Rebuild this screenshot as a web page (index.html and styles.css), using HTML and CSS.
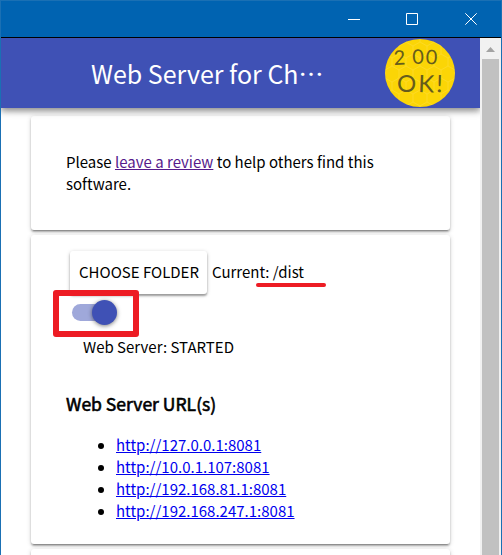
FILE: index.html
```html
<!DOCTYPE html>
<html lang="en">
<head>
<meta charset="utf-8">
<title>Web Server for Chrome</title>
<link rel="stylesheet" href="styles.css">
</head>
<body>
<div class="window">
  <div class="titlebar">
    <svg class="control minimize" viewBox="0 0 12 12"><path d="M0 6.5H12"/></svg>
    <svg class="control" viewBox="0 0 12 12"><path d="M.5.5h11v11H.5z"/></svg>
    <svg class="control" viewBox="0 0 12 12"><path d="M.3.3l11.4 11.4M11.7.3L.3 11.7"/></svg>
  </div>
  <div class="viewport">
    <main class="page">
      <header class="toolbar">
        <h1 class="title">Web Server for Ch<span class="dots" lang="zh-CN">…</span></h1>
        <svg class="badge" viewBox="0 0 70 70">
          <defs>
            <pattern id="hex" width="14" height="24" patternUnits="userSpaceOnUse">
              <path d="M7 0v4l7 4v8l-7 4v4M7 4L0 8v8l7 4" fill="none" stroke="#ffe052" stroke-width=".8"/>
            </pattern>
          </defs>
          <ellipse cx="35" cy="35" rx="35" ry="34" fill="#fbd506"/>
          <ellipse cx="35" cy="35" rx="35" ry="34" fill="url(#hex)" opacity=".5"/>
          <text class="ink" x="9 27.500 40.500" y="27 26 26" font-size="20" rotate="-3 -2 2">200</text>
          <text class="ink" x="12 33 51" y="54 54 54" font-size="24" rotate="0 2 2">OK!</text>
        </svg>
      </header>
      <div class="cards">
        <section class="card review">
          <p class="text">Please <a class="visited" href="#">leave a review</a> to help others find this<br>software.</p>
        </section>
        <section class="card server">
          <div class="folder">
            <button class="choose">CHOOSE FOLDER</button>
            <span class="current">Current: /dist<i class="underline"></i></span>
          </div>
          <div class="switch"><span class="track"></span><span class="knob"></span><span class="frame"></span></div>
          <div class="status">Web Server: STARTED</div>
          <h2 class="heading">Web Server URL(s)</h2>
          <ul class="urls">
            <li><a href="#">http://127.0.0.1:8081</a></li>
            <li><a href="#">http://10.0.1.107:8081</a></li>
            <li><a href="#">http://192.168.81.1:8081</a></li>
            <li><a href="#">http://192.168.247.1:8081</a></li>
          </ul>
        </section>
        <section class="card next"></section>
      </div>
    </main>
    <div class="scrollbar">
      <svg class="arrow" viewBox="0 0 9 5"><path d="M0 5L4.5 0 9 5z"/></svg>
      <div class="thumb"></div>
    </div>
  </div>
</div>
</body>
</html>
```
FILE: styles.css
```css
* { box-sizing: border-box; }
body {
  margin: 0;
  overflow: hidden;
  font: 15px/22px "Noto Sans CJK SC", "Noto Sans", sans-serif;
  color: #000;
}
.window {
  display: flex;
  flex-direction: column;
  width: 502px;
  height: 555px;
  border: 1px solid #1a70b4;
  border-bottom: 0;
  background: #fff;
}
.titlebar {
  flex: none;
  display: flex;
  justify-content: flex-end;
  gap: 47px;
  height: 37px;
  padding: 12px 24px 0 0;
  background: #0063b1;
  border-bottom: 1px solid #000;
}
.control {
  width: 12px;
  height: 12px;
  fill: none;
  stroke: #fff;
  stroke-width: 1;
}
.minimize { margin-right: -1px; }
.viewport { flex: 1; min-height: 0; display: flex; }
.page { width: 479px; overflow: hidden; display: flex; flex-direction: column; }
.toolbar {
  position: relative;
  flex: none;
  display: flex;
  height: 70px;
  padding-left: 90px;
  background: #3f51b5;
  box-shadow: 0 3px 6px rgba(0, 0, 0, .4), 0 1px 12px rgba(0, 0, 0, .12);
}
.title {
  width: 294px;
  margin: 0;
  font-size: 25px;
  font-weight: 400;
  line-height: 71px;
  color: #fff;
  white-space: nowrap;
}
.badge { width: 70px; height: 70px; }
.ink { font-family: Lato, sans-serif; fill: #655c1c; }
.cards { display: flex; flex-direction: column; gap: 5px; padding: 8px 30px 0; }
.card {
  flex: none;
  width: 419px;
  background: #fff;
  border-radius: 3px;
  box-shadow: 0 2px 2px rgba(0, 0, 0, .26), 0 1px 5px rgba(0, 0, 0, .16), 0 3px 1px -2px rgba(0, 0, 0, .2);
}
.review { height: 114px; padding: 35px; }
.text { margin: 0; white-space: nowrap; }
.visited { color: #551a8b; }
.server { height: 309px; padding: 16px 35px 0; }
.folder { display: flex; gap: 5px; height: 43px; margin-left: 4px; }
.choose {
  width: 137px;
  height: 43px;
  padding: 0 0 2px 1px;
  border: 0;
  border-radius: 3px;
  background: #fff;
  font: inherit;
  color: inherit;
  white-space: nowrap;
  box-shadow: 0 2px 2px rgba(0, 0, 0, .3), 0 1px 4px rgba(0, 0, 0, .2);
}
.current { position: relative; line-height: 41px; white-space: nowrap; }
.underline {
  position: absolute;
  left: 44px;
  top: 32px;
  width: 70px;
  height: 4px;
  border-radius: 2px;
  background: #ed1c24;
}
.switch {
  position: relative;
  display: flex;
  align-items: center;
  width: 46px;
  height: 26px;
  margin: 5px 0 0 6px;
}
.track { width: 38px; height: 17px; border-radius: 9px; background: #9fa8da; }
.knob {
  width: 25px;
  height: 25px;
  margin-left: -18px;
  flex: none;
  border-radius: 50%;
  background: #3f51b5;
  box-shadow: 0 1px 4px rgba(0, 0, 0, .5);
}
.frame {
  position: absolute;
  left: -19px;
  top: -9px;
  width: 86px;
  height: 47px;
  border: 6px solid #ed1c24;
  border-radius: 3px;
}
.status { margin: 11px 0 0 17px; }
.heading {
  margin: 33px 0 0;
  font-size: 17.55px;
  line-height: 26px;
  font-weight: 400;
  -webkit-text-stroke: .6px #000;
}
.urls { margin: 17px 0 0; padding-left: 50px; }
.urls a { color: #0000ee; }
.next { height: 60px; }
.scrollbar {
  width: 21px;
  display: flex;
  flex-direction: column;
  align-items: center;
  background: #f1f1f1;
}
.arrow { width: 9px; height: 5px; margin-top: 9px; fill: #a3a3a3; }
.thumb { width: 17px; flex: 1; margin-top: 7px; background: #c1c1c1; }
```
